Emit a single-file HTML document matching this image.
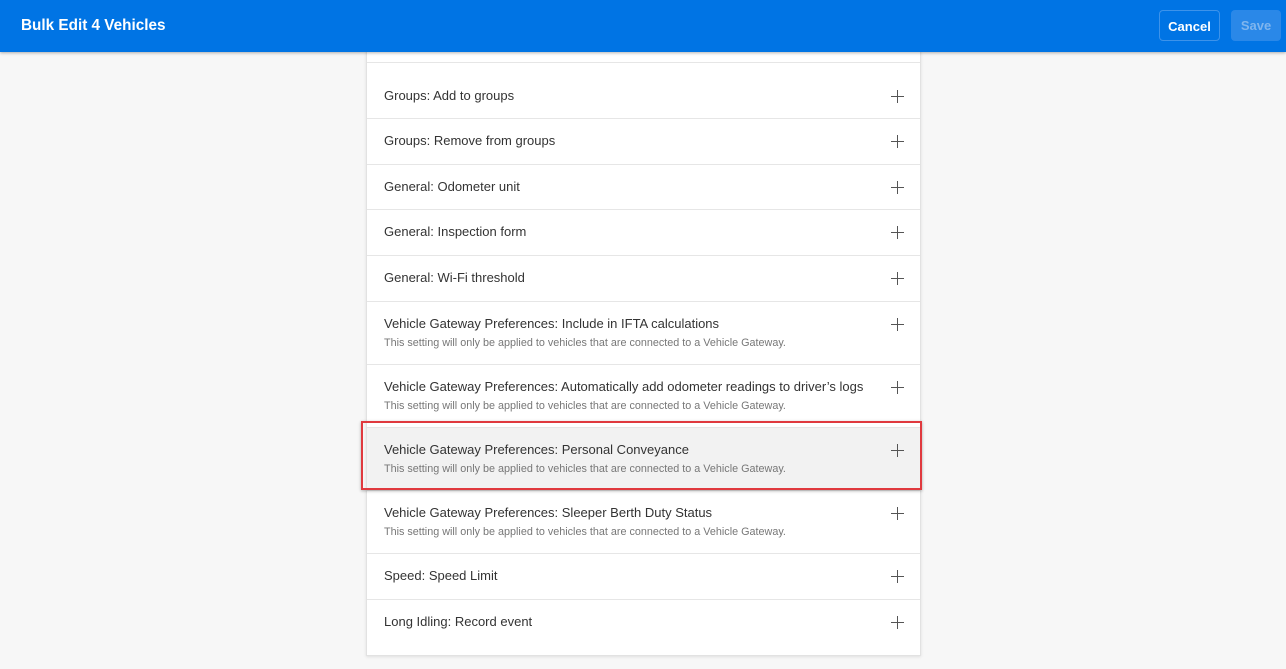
<!DOCTYPE html><html><head><style>
body{margin:0;width:1286px;height:669px;background:#f7f7f7;font-family:"Liberation Sans",sans-serif;overflow:hidden;position:relative}
.hd{position:absolute;left:0;top:0;width:1286px;height:52px;background:#0074e4;box-shadow:0 1px 3px rgba(0,0,0,.3);z-index:2}
.hd h1{margin:0;position:absolute;left:21px;top:17px;color:#fff;font-size:15.3px;font-weight:bold}
.btn{position:absolute;top:10px;height:31px;border-radius:4px;font-size:13px;font-weight:bold;line-height:31px;text-align:center}
.panel{position:absolute;left:366px;top:40px;width:553px;height:615px;background:#fff;border:1px solid #e2e2e2;border-top:none;box-shadow:0 1px 3px rgba(0,0,0,.1)}
.row{position:absolute;left:0;width:553px;border-top:1px solid #e6e6e6;box-sizing:border-box}
.t{position:absolute;left:17px;font-size:13px;color:#333}
.s{position:absolute;left:17px;font-size:10.8px;color:#777}
.p{position:absolute;left:524px;width:13px;height:13px}
.p:before{content:"";position:absolute;left:6px;top:0;width:1px;height:13px;background:#555}
.p:after{content:"";position:absolute;left:0;top:6px;width:13px;height:1px;background:#555}
</style></head><body>
<div class="hd"><h1>Bulk Edit 4 Vehicles</h1>
<div class="btn" style="left:1159px;width:61px;border:1px solid #3d93ea;color:#fff;box-sizing:border-box">Cancel</div>
<div class="btn" style="left:1231px;width:50px;background:#2a88e8;color:#7fb5ee">Save</div></div>
<div class="panel">
<div class="row" style="top:22px;height:56px"><div class="t" style="top:25px">Groups: Add to groups</div><div class="p" style="top:27px"></div></div>
<div class="row" style="top:78px;height:46px"><div class="t" style="top:14px">Groups: Remove from groups</div><div class="p" style="top:16px"></div></div>
<div class="row" style="top:124px;height:45px"><div class="t" style="top:14px">General: Odometer unit</div><div class="p" style="top:16px"></div></div>
<div class="row" style="top:169px;height:46px"><div class="t" style="top:14px">General: Inspection form</div><div class="p" style="top:16px"></div></div>
<div class="row" style="top:215px;height:46px"><div class="t" style="top:14px">General: Wi-Fi threshold</div><div class="p" style="top:16px"></div></div>
<div class="row" style="top:261px;height:63px"><div class="t" style="top:14px">Vehicle Gateway Preferences: Include in IFTA calculations</div><div class="s" style="top:35px">This setting will only be applied to vehicles that are connected to a Vehicle Gateway.</div><div class="p" style="top:16px"></div></div>
<div class="row" style="top:324px;height:63px"><div class="t" style="top:14px">Vehicle Gateway Preferences: Automatically add odometer readings to driver’s logs</div><div class="s" style="top:35px">This setting will only be applied to vehicles that are connected to a Vehicle Gateway.</div><div class="p" style="top:16px"></div></div>
<div class="row" style="top:387px;height:63px;background:#f2f2f2"><div class="t" style="top:14px">Vehicle Gateway Preferences: Personal Conveyance</div><div class="s" style="top:35px">This setting will only be applied to vehicles that are connected to a Vehicle Gateway.</div><div class="p" style="top:16px"></div></div>
<div class="row" style="top:450px;height:63px"><div class="t" style="top:14px">Vehicle Gateway Preferences: Sleeper Berth Duty Status</div><div class="s" style="top:35px">This setting will only be applied to vehicles that are connected to a Vehicle Gateway.</div><div class="p" style="top:16px"></div></div>
<div class="row" style="top:513px;height:46px"><div class="t" style="top:14px">Speed: Speed Limit</div><div class="p" style="top:16px"></div></div>
<div class="row" style="top:559px;height:56px"><div class="t" style="top:14px">Long Idling: Record event</div><div class="p" style="top:16px"></div></div>
</div>
<div style="position:absolute;left:361px;top:421px;width:557px;height:65px;border:2px solid #e0393e;box-shadow:0 1px 3px rgba(0,0,0,.3)"></div>
</body></html>
